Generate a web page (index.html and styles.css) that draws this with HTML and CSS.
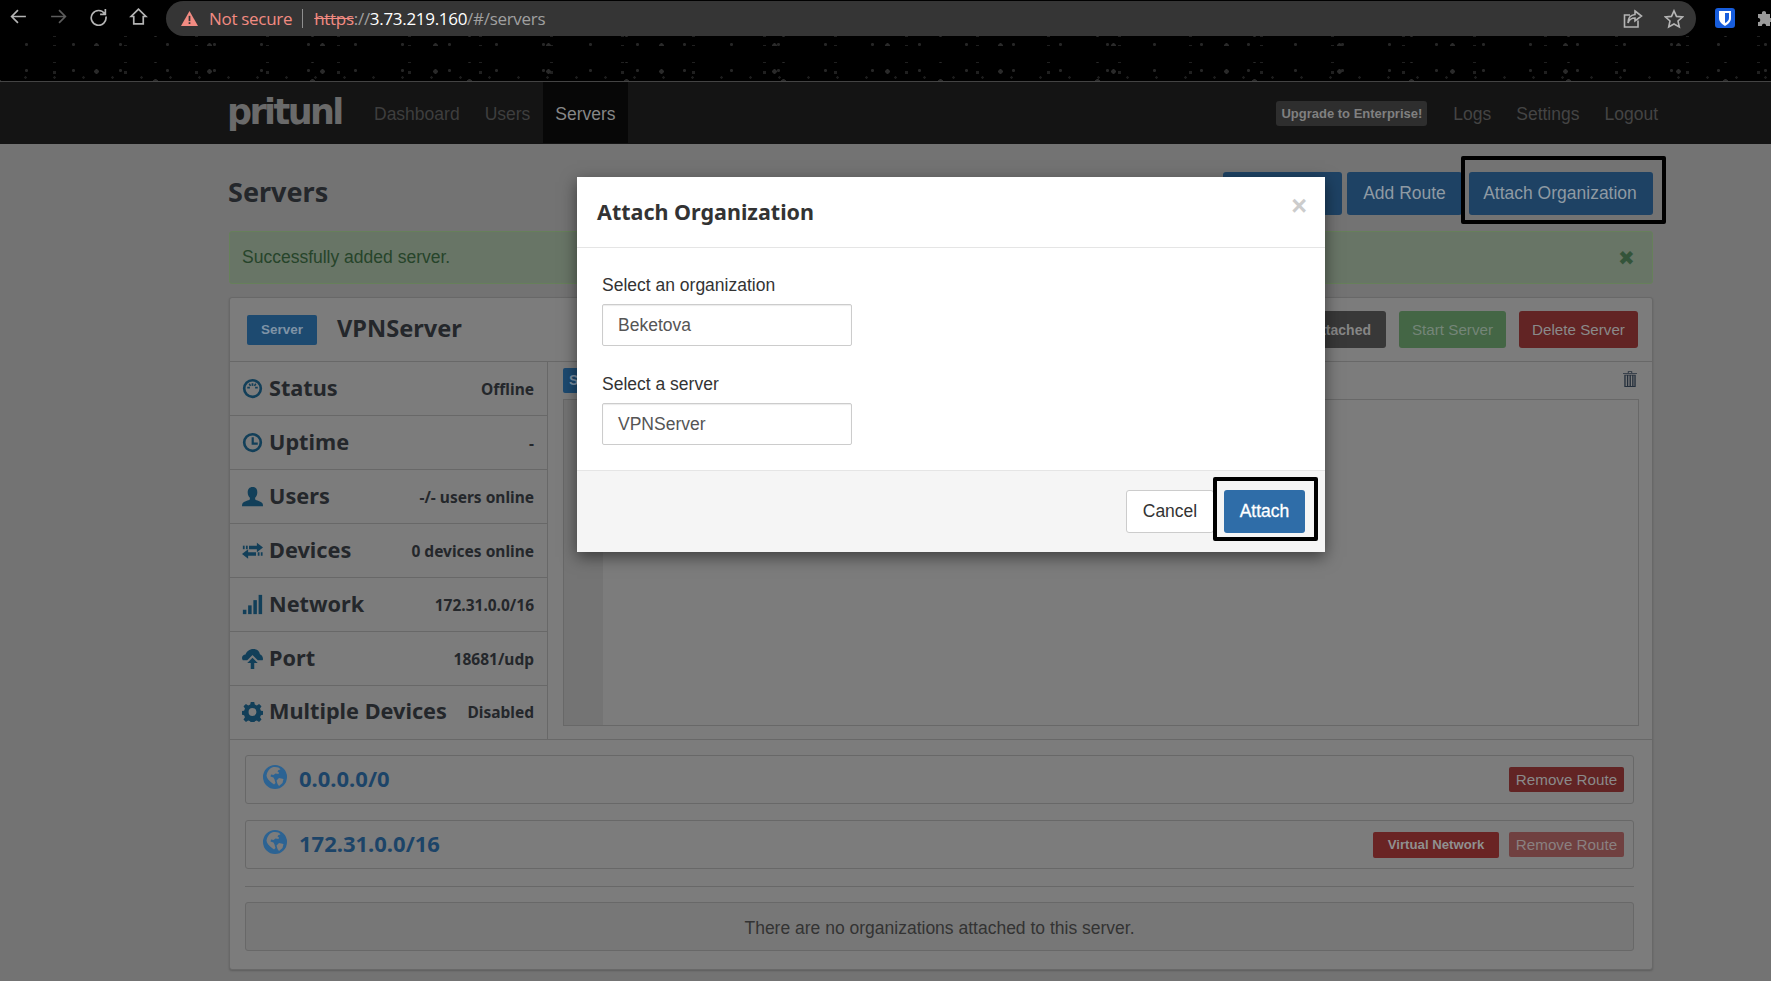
FILE: index.html
```html
<!DOCTYPE html>
<html lang="en">
<head>
  <meta charset="UTF-8" />
  <title>Pritunl - Servers</title>
  <link rel="stylesheet" href="styles.css">
</head>
<body>

<svg class="defs" width="0" height="0">
  <symbol id="i-gauge" viewBox="0 0 24 24">
    <path fill-rule="evenodd" d="M12 1a11 11 0 1 0 0 22 11 11 0 0 0 0-22zm0 3a8 8 0 1 1 0 16 8 8 0 0 1 0-16z"/>
    <rect x="11" y="6" width="2" height="3"/><rect x="6" y="10" width="3" height="2"/><rect x="15" y="10" width="3" height="2"/>
    <path d="M7.500 7l1.500-1 1.500 2.500-1.500 1zM16.500 7l-1.500-1-1.500 2.500 1.500 1z"/>
  </symbol>
  <symbol id="i-clock" viewBox="0 0 24 24">
    <path fill-rule="evenodd" d="M12 1a11 11 0 1 0 0 22 11 11 0 0 0 0-22zm0 3a8 8 0 1 1 0 16 8 8 0 0 1 0-16z"/>
    <path d="M11 6h2.500v6H18v2.500h-7z"/>
  </symbol>
  <symbol id="i-user" viewBox="0 0 24 24">
    <path d="M12 1c3.500 0 5.500 2.500 5.500 6 0 2.500-1 5-2.500 6.500v2c1 1 7 2 8.500 4.500.4.800.5 2 .5 3H0c0-1 .1-2.200.5-3C2 17.500 8 16.500 9 15.500v-2C7.500 12 6.500 9.500 6.500 7c0-3.500 2-6 5.500-6z"/>
  </symbol>
  <symbol id="i-transfer" viewBox="0 0 24 24">
    <path d="M17 3l7 5.500-7 5.500v-3.500H8V6.500h9zM7 10.500V14h9v4H7v3.500L0 16z"/>
    <rect x="1" y="6.500" width="2" height="4"/><rect x="4.500" y="6.500" width="2" height="4"/>
    <rect x="18" y="14" width="2" height="4"/><rect x="21.500" y="14" width="2" height="4"/>
  </symbol>
  <symbol id="i-signal" viewBox="0 0 24 24">
    <rect x="1" y="18" width="4" height="5"/><rect x="7" y="13" width="4" height="10"/>
    <rect x="13" y="7" width="4" height="16"/><rect x="19" y="1" width="4" height="22"/>
  </symbol>
  <symbol id="i-cloud" viewBox="0 0 24 24">
    <path d="M13 1c4 0 7 2.500 7.500 6 2 .5 3.500 3 3.500 5.500 0 .5-.2 1-.5 1.500H18l-6-6-6 6H1c-.6-.8-1-1.500-1-2.500C0 9 2 7.500 4 7.500 5 4 8.500 1 13 1z"/>
    <path d="M12 11l6 6h-4v7h-4v-7H6z"/>
  </symbol>
  <symbol id="i-cog" viewBox="0 0 24 24">
    <path fill-rule="evenodd" d="M10 1h4l.6 3 2.300 1 2.600-1.700 2.800 2.800-1.700 2.600 1 2.300 3 .6v4l-3 .6-1 2.300 1.700 2.600-2.800 2.800-2.600-1.700-2.300 1-.6 3h-4l-.6-3-2.300-1-2.600 1.700-2.800-2.800 1.700-2.600-1-2.300-3-.6v-4l3-.6 1-2.300-1.700-2.600 2.800-2.800 2.600 1.700 2.300-1zM12 8a4.500 4.500 0 1 0 0 9 4.500 4.500 0 0 0 0-9z"/>
  </symbol>
  <symbol id="i-globe" viewBox="0 0 24 24">
    <path fill-rule="evenodd" d="M12 0a12 12 0 1 0 0 24 12 12 0 0 0 0-24zM9 2.500c2-.6 5-.6 7 .3l1.500 1.700-2 .5-1 1.500 1.500 1-.5 1.500-3-.5-2 1.500-2.500-.5-.5 2 3 1 1 2 1 3.500-1.500 1.500C6 16 3.500 13 3.500 10.500 4.500 6 6 4 9 2.500zm7 10.500l4.500 1-1 4-3.500 3-1.500-2-1-3.500z"/>
  </symbol>
  <symbol id="i-trash" viewBox="0 0 16 18">
    <path d="M5.500 0h5v2H16v1H0V2h5.500zM6.500 1v1h3V1z"/>
    <path fill-rule="evenodd" d="M1.500 4h13v14h-13zM3 5v12h1.500V5zm3 0v12h1.500V5zm3 0v12h1.500V5zm3 0v12h1V5z"/>
  </symbol>
</svg>

<div class="browser">
  <div class="browser-nav">
    <svg class="tool" viewBox="0 0 18 18"><path d="M16 9H3M8.500 3L2.500 9l6 6" /></svg>
    <svg class="tool tool-off" viewBox="0 0 18 18"><path d="M2 9h13M9.500 3l6 6-6 6" /></svg>
    <svg class="tool" viewBox="0 0 18 18"><path d="M15 6.500A7 7 0 1 0 16 9M15.500 2v5h-5" /></svg>
    <svg class="tool" viewBox="0 0 18 18"><path d="M9 2L2 9h2.500v7h9V9H16z" /></svg>
  </div>
  <div class="address">
    <svg class="warn" viewBox="0 0 16 14"><path d="M8 0l8 14H0z"/><rect class="warn-mark" x="7.200" y="4.500" width="1.600" height="5"/><rect class="warn-mark" x="7.200" y="10.500" width="1.600" height="1.700"/></svg>
    <span class="not-secure">Not secure</span>
    <span class="address-sep"></span>
    <span class="url"><s>https</s>://<b>3.73.219.160</b>/#/servers</span>
    <svg class="tool share" viewBox="0 0 20 20"><path d="M15 11.500V18H1.500V6H7M12 2l6.500 5-6.500 5V9c-4 0-6 2-7 5 0-5 2.500-8 7-8.500z" /></svg>
    <svg class="tool star" viewBox="0 0 20 20"><path d="M10 1.800l2.500 5.600 6 .6-4.500 4 1.300 6L10 15l-5.300 3 1.300-6-4.500-4 6-.6z" /></svg>
  </div>
  <svg class="bitwarden" viewBox="0 0 20 20"><rect width="20" height="20" rx="3"/><path class="bw-shield" d="M4 3h12v7c0 4-3 6-6 8-3-2-6-4-6-8z"/><path d="M10 5h4v5c0 2.500-2 4-4 5z"/></svg>
  <svg class="puzzle" viewBox="0 0 18 18"><path d="M2 5h4c-1-4 5-4 4 0h4v4c4-1 4 5 0 4v4H10c1-3-5-3-4 0H2v-4c3 1 3-5 0-4z"/></svg>
</div>

<nav class="navbar">
  <span class="logo">pritunl</span>
  <a class="nav-link">Dashboard</a>
  <a class="nav-link">Users</a>
  <a class="nav-link active">Servers</a>
  <span class="nav-spacer"></span>
  <span class="upgrade">Upgrade to Enterprise!</span>
  <a class="nav-link nav-right">Logs</a>
  <a class="nav-link nav-right">Settings</a>
  <a class="nav-link nav-right">Logout</a>
</nav>

<main class="container">
  <div class="page-head">
    <h1>Servers</h1>
    <div class="head-buttons">
      <button class="btn btn-blue btn-hidden"></button>
      <button class="btn btn-blue btn-route">Add Route</button>
      <span class="marked marked-org"><button class="btn btn-blue btn-org">Attach Organization</button></span>
    </div>
  </div>

  <div class="alert">
    <span>Successfully added server.</span>
    <span class="alert-close">&#10006;</span>
  </div>

  <section class="panel">
    <div class="panel-head">
      <span class="server-label">Server</span>
      <h2>VPNServer</h2>
      <span class="panel-actions">
        <button class="btn-sm btn-dark">Attached</button>
        <button class="btn-sm btn-green">Start Server</button>
        <button class="btn-sm btn-red">Delete Server</button>
      </span>
    </div>

    <div class="panel-body">
      <div class="stats">
        <div class="stat"><svg class="stat-icon"><use href="#i-gauge"/></svg><span class="stat-name">Status</span><span class="stat-value">Offline</span></div>
        <div class="stat"><svg class="stat-icon"><use href="#i-clock"/></svg><span class="stat-name">Uptime</span><span class="stat-value">-</span></div>
        <div class="stat"><svg class="stat-icon"><use href="#i-user"/></svg><span class="stat-name">Users</span><span class="stat-value">-/- users online</span></div>
        <div class="stat"><svg class="stat-icon"><use href="#i-transfer"/></svg><span class="stat-name">Devices</span><span class="stat-value">0 devices online</span></div>
        <div class="stat"><svg class="stat-icon"><use href="#i-signal"/></svg><span class="stat-name">Network</span><span class="stat-value">172.31.0.0/16</span></div>
        <div class="stat"><svg class="stat-icon"><use href="#i-cloud"/></svg><span class="stat-name">Port</span><span class="stat-value">18681/udp</span></div>
        <div class="stat"><svg class="stat-icon"><use href="#i-cog"/></svg><span class="stat-name">Multiple Devices</span><span class="stat-value">Disabled</span></div>
      </div>
      <div class="output">
        <div class="output-tabs">
          <span class="tab">Server Output</span>
          <svg class="trash"><use href="#i-trash"/></svg>
        </div>
        <div class="log"><div class="gutter"></div></div>
      </div>
    </div>

    <div class="routes">
      <div class="route">
        <svg class="globe"><use href="#i-globe"/></svg>
        <span class="route-name">0.0.0.0/0</span>
        <button class="btn-xs btn-red">Remove Route</button>
      </div>
      <div class="route">
        <svg class="globe"><use href="#i-globe"/></svg>
        <span class="route-name">172.31.0.0/16</span>
        <span class="virtual">Virtual Network</span>
        <button class="btn-xs btn-disabled">Remove Route</button>
      </div>
      <hr>
      <div class="no-orgs">There are no organizations attached to this server.</div>
    </div>
  </section>
</main>

<div class="modal">
  <div class="modal-head">
    <h3>Attach Organization</h3>
    <span class="modal-close">&times;</span>
  </div>
  <div class="modal-body">
    <label>Select an organization</label>
    <div class="select">Beketova</div>
    <label>Select a server</label>
    <div class="select">VPNServer</div>
  </div>
  <div class="modal-foot">
    <button class="btn btn-cancel">Cancel</button>
    <span class="marked marked-attach"><button class="btn btn-attach">Attach</button></span>
  </div>
</div>

</body>
</html>
```

FILE: styles.css
```css
* {
  box-sizing: border-box;
}
html, body {
  height: 981px;
  overflow: hidden;
}
body {
  margin: 0;
  background-color: #737373;
  font-family: "Liberation Sans", Arial, sans-serif;
  font-size: 17.500px;
  color: #2a2a2a;
}
button {
  font-family: inherit;
  border: none;
  padding: 0;
}
h1, h2, h3 {
  margin: 0;
  font-family: "Noto Sans", sans-serif;
  font-weight: 700;
}
.defs {
  position: absolute;
}

/* browser chrome */
.browser {
  position: relative;
  height: 82px;
  background-color: #000;
  border-bottom: 1px solid #444;
  display: flex;
  align-items: flex-start;
}
.browser::before, .browser::after {
  content: "";
  position: absolute;
  left: 0;
  right: 0;
  background-image:
    radial-gradient(circle, #262626 1.2px, transparent 1.8px),
    radial-gradient(circle, #1c1c1c 1px, transparent 1.5px),
    radial-gradient(circle, #2a2a2a 2px, transparent 2.5px),
    radial-gradient(circle, #202020 1.5px, transparent 2px),
    radial-gradient(circle, #2a2a2a 3px, transparent 3.5px);
  background-size: 47px 13px, 29px 17px, 113px 19px, 71px 11px, 157px 23px;
  background-position: 3px 2px, 11px 7px, 40px 0, 19px 5px, 77px 9px;
}
.browser::before {
  top: 36px;
  height: 10px;
}
.browser::after {
  top: 62px;
  height: 19px;
}
.browser-nav {
  flex: none;
  display: flex;
  gap: 21px;
  padding: 7px 0 0 9px;
  width: 166px;
}
.tool {
  flex: none;
  width: 19px;
  height: 19px;
  fill: none;
  stroke: #b4b4b4;
  stroke-width: 1.6;
}
.tool-off {
  stroke: #5c5c5c;
}
.address {
  flex: none;
  position: relative;
  z-index: 1;
  margin-top: 1px;
  width: 1530px;
  height: 35px;
  background-color: #353535;
  border-radius: 18px;
  display: flex;
  align-items: center;
  padding-left: 15px;
  font-family: "Open Sans", sans-serif;
  font-size: 17px;
  letter-spacing: -0.3px;
}
.warn {
  width: 17px;
  height: 15px;
  fill: #f28b82;
}
.warn-mark {
  fill: #353535;
}
.not-secure {
  color: #f28b82;
  margin-left: 11px;
}
.address-sep {
  width: 1px;
  height: 19px;
  background-color: #8f8f8f;
  margin: 0 11px 0 10px;
}
.url {
  color: #a0a0a0;
  flex: 1;
}
.url s {
  color: #f28b82;
}
.url b {
  color: #fff;
  font-weight: 400;
}
.share {
  margin-right: 21px;
  width: 20px;
  height: 20px;
}
.star {
  margin-right: 12px;
  width: 20px;
  height: 20px;
}
.bitwarden {
  flex: none;
  width: 20px;
  height: 22px;
  margin: 7px 0 0 19px;
  fill: #175ddc;
}
.bw-shield {
  fill: #fff;
}
.puzzle {
  flex: none;
  width: 18px;
  height: 18px;
  margin: 9px 0 0 21px;
  fill: #9a9a9a;
}

/* navbar */
.navbar {
  height: 62px;
  background-color: #141414;
  display: flex;
  align-items: stretch;
  padding: 0 100px 0 229px;
}
.logo {
  font-family: "DejaVu Sans", sans-serif;
  font-weight: 700;
  font-size: 35px;
  letter-spacing: -2.600px;
  color: #6a6a6a;
  line-height: 60px;
  width: 133px;
  margin-left: -2px;
  margin-right: 2px;
}
.nav-link {
  color: #3e3e3e;
  padding: 0 12px;
  margin-right: 1px;
  line-height: 64px;
}
.nav-link.active {
  background-color: #070707;
  color: #868686;
  height: 61px;
  margin-left: 0;
}
.nav-spacer {
  flex: 1;
}
.upgrade {
  align-self: flex-start;
  margin-top: 19px;
  height: 25px;
  background-color: #2e2e2e;
  color: #808080;
  border-radius: 3px;
  font-size: 13px;
  font-weight: 700;
  line-height: 26px;
  padding: 0 5px;
  margin-right: 14px;
}
.nav-right {
  color: #444;
}

/* page */
.container {
  width: 1424px;
  margin-left: 229px;
  padding-top: 28px;
}
.page-head {
  display: flex;
  justify-content: space-between;
  align-items: center;
  height: 43px;
}
h1 {
  font-size: 27px;
  color: #24272b;
  margin-left: -1px;
  margin-bottom: 5px;
}
.head-buttons {
  display: flex;
  gap: 5px;
}
.btn {
  height: 43px;
  border-radius: 3px;
  font-size: 17.500px;
}
.btn-blue {
  background-color: #1e4264;
  color: #8f9aa3;
}
.btn-hidden {
  width: 119px;
}
.btn-route {
  width: 115px;
}
.btn-org {
  width: 184px;
  margin-left: 2px;
  padding-right: 2px;
}
.marked {
  position: relative;
  display: inline-block;
}
.marked::after {
  content: "";
  position: absolute;
  border: 4px solid #000;
  border-radius: 2px;
}
.marked-org::after {
  top: -16px;
  bottom: -9px;
  left: -6px;
  right: -13px;
}
.marked-attach::after {
  top: -13px;
  bottom: -8px;
  left: -11px;
  right: -13px;
}
.alert {
  margin-top: 16px;
  height: 53px;
  background-color: #687566;
  border: 1px solid #66805a;
  border-radius: 3px;
  color: #26442a;
  display: flex;
  justify-content: space-between;
  align-items: center;
  padding: 0 17px 0 12px;
}
.alert-close {
  font-size: 20px;
  line-height: 20px;
  color: #34543a;
}

/* server panel */
.panel {
  margin-top: 13px;
  background-color: #7c7c7c;
  border: 1px solid #686868;
  border-radius: 3px;
  height: 673px;
  box-shadow: 0 1px 2px rgba(0, 0, 0, 0.2);
}
.panel-head {
  height: 64px;
  border-bottom: 1px solid #686868;
  display: flex;
  align-items: center;
  padding: 0 14px 0 17px;
}
.server-label {
  width: 70px;
  height: 30px;
  background-color: #1d4a70;
  color: #7f93a6;
  border-radius: 2px;
  font-size: 13.500px;
  font-weight: 700;
  text-align: center;
  line-height: 30px;
}
h2 {
  margin-left: 20px;
  margin-bottom: 4px;
  font-size: 23.600px;
  color: #24272b;
}
.panel-actions {
  margin-left: auto;
  display: flex;
  gap: 13px;
}
.btn-sm {
  height: 37px;
  border-radius: 3px;
  font-size: 15.200px;
}
.btn-dark {
  width: 160px;
  background-color: #383838;
  color: #868686;
  font-weight: 700;
  font-size: 14px;
  text-align: right;
  padding-right: 15px;
}
.btn-green {
  width: 107px;
  background-color: #446645;
  color: #748578;
}
.btn-red {
  background-color: #622424;
  color: #8a8a8a;
}
.btn-sm.btn-red {
  width: 119px;
}
.panel-body {
  display: flex;
  height: 378px;
  border-bottom: 1px solid #686868;
}
.stats {
  width: 318px;
  height: 377px;
  border-right: 1px solid #686868;
}
.stat {
  height: 54px;
  display: flex;
  align-items: center;
  padding: 0 13px 0 12px;
  border-bottom: 1px solid #686868;
}
.stat:last-child {
  border-bottom: none;
  padding-bottom: 3px;
}
.stat-icon {
  width: 21px;
  height: 21px;
  fill: #123f59;
  flex: none;
}
.stat-name {
  margin-left: 6px;
  margin-bottom: 2px;
  font-family: "Noto Sans", sans-serif;
  font-weight: 700;
  font-size: 21.700px;
  color: #24272b;
}
.stat-value {
  margin-left: auto;
  font-family: "Noto Sans", sans-serif;
  font-weight: 700;
  font-size: 15.500px;
  color: #24272b;
}
.output {
  flex: 1;
  padding: 6px 13px 0 15px;
}
.output-tabs {
  display: flex;
  justify-content: space-between;
  align-items: flex-start;
  height: 25px;
  margin-bottom: 6px;
}
.tab {
  height: 25px;
  background-color: #1d4a70;
  color: #7f93a6;
  font-weight: 700;
  font-size: 14px;
  line-height: 25px;
  padding: 0 6px;
  border-radius: 2px;
}
.trash {
  width: 14px;
  height: 16px;
  margin: 3px 2px 0 0;
  fill: #242f3c;
}
.log {
  height: 327px;
  border: 1px solid #686868;
  display: flex;
}
.gutter {
  width: 39px;
  background-color: #747474;
}
.routes {
  padding: 15px 18px 0 15px;
}
.route {
  height: 49px;
  border: 1px solid #686868;
  border-radius: 3px;
  margin-bottom: 16px;
  display: flex;
  align-items: center;
  padding: 0 9px 0 17px;
}
.globe {
  width: 24px;
  height: 24px;
  fill: #2c6393;
  margin-bottom: 5px;
}
.route-name {
  margin-left: 12px;
  margin-bottom: 4px;
  font-family: "Noto Sans", sans-serif;
  font-weight: 700;
  font-size: 22px;
  color: #1c4468;
}
.btn-xs {
  height: 25px;
  width: 115px;
  margin-left: 10px;
  border-radius: 2px;
  font-size: 15.200px;
}
.route-name + .btn-xs,
.route-name + .virtual {
  margin-left: auto;
}
.btn-disabled {
  background-color: #704040;
  color: #8a8080;
}
.virtual {
  width: 126px;
  height: 26px;
  background-color: #6a2424;
  color: #909090;
  border-radius: 2px;
  font-size: 13.200px;
  font-weight: 700;
  text-align: center;
  line-height: 26px;
}
hr {
  border: none;
  border-top: 1px solid #686868;
  margin: 17px 0 15px;
}
.no-orgs {
  height: 49px;
  border: 1px solid #686868;
  border-radius: 3px;
  background-color: #777;
  color: #333;
  text-align: center;
  line-height: 50px;
}

/* modal */
.modal {
  position: absolute;
  left: 577px;
  top: 177px;
  width: 748px;
  height: 375px;
  background-color: #fff;
  box-shadow: 0 5px 15px rgba(0, 0, 0, 0.5);
  display: flex;
  flex-direction: column;
}
.modal-head {
  flex: none;
  height: 71px;
  border-bottom: 1px solid #e5e5e5;
  display: flex;
  justify-content: space-between;
  padding: 20px 18px 0 20px;
}
h3 {
  font-size: 21.500px;
  color: #333;
}
.modal-close {
  font-size: 27px;
  font-weight: 700;
  color: #ccc;
  line-height: 1;
  margin-top: -4px;
}
.modal-body {
  flex: 1;
  padding: 27px 25px 0;
}
label {
  display: block;
  color: #333;
  line-height: 21px;
  margin-bottom: 8px;
}
.select {
  width: 250px;
  height: 42px;
  border: 1px solid #ccc;
  border-radius: 2px;
  box-shadow: inset 0 1px 1px rgba(0, 0, 0, 0.08);
  color: #555;
  line-height: 40px;
  padding-left: 15px;
  margin-bottom: 28px;
}
.select:last-child {
  margin-bottom: 0;
}
.modal-foot {
  flex: none;
  height: 82px;
  background-color: #f5f5f5;
  border-top: 1px solid #e5e5e5;
  display: flex;
  justify-content: flex-end;
  align-items: flex-start;
  gap: 10px;
  padding: 19px 20px 0 0;
}
.btn-cancel {
  width: 88px;
  background-color: #fff;
  border: 1px solid #ccc;
  color: #333;
}
.btn-attach {
  display: block;
  width: 81px;
  background-color: #2f6da8;
  color: #fff;
  -webkit-text-stroke: 0.3px #fff;
}
```
